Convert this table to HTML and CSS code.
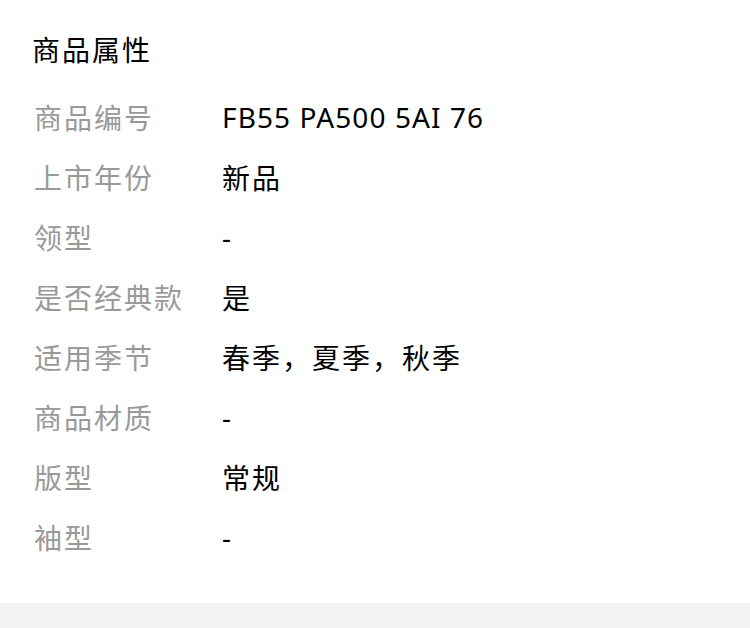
FILE: index.html
```html
<!DOCTYPE html>
<html lang="zh">
<head>
<meta charset="utf-8">
<link rel="stylesheet" href="styles.css">
</head>
<body>
<div class="page">
  <section class="attrs">
    <h2 class="title">商品属性</h2>
    <div class="row"><div class="label">商品编号</div><div class="value latin">FB55 PA500 5AI 76</div></div>
    <div class="row"><div class="label">上市年份</div><div class="value">新品</div></div>
    <div class="row"><div class="label">领型</div><div class="value">-</div></div>
    <div class="row"><div class="label">是否经典款</div><div class="value">是</div></div>
    <div class="row"><div class="label">适用季节</div><div class="value">春季，夏季，秋季</div></div>
    <div class="row"><div class="label">商品材质</div><div class="value">-</div></div>
    <div class="row"><div class="label">版型</div><div class="value">常规</div></div>
    <div class="row"><div class="label">袖型</div><div class="value">-</div></div>
  </section>
  <div class="footer"></div>
</div>
</body>
</html>
```
FILE: styles.css
```css
html, body {
  margin: 0;
  padding: 0;
  background: #ffffff;
}
.page {
  width: 750px;
  height: 628px;
  display: flex;
  flex-direction: column;
  font-family: "Noto Sans", "Noto Sans CJK SC", sans-serif;
}
.attrs {
  padding: 20px 0 36px 32px;
}
.title {
  margin: 0 0 7px 0;
  font-size: 28px;
  font-weight: 400;
  line-height: 60px;
  letter-spacing: 2px;
  color: #000;
}
.row {
  display: flex;
  height: 60px;
  align-items: center;
  font-size: 28px;
  letter-spacing: 2px;
}
.label {
  width: 188px;
  padding-left: 2px;
  color: #999999;
}
.value {
  color: #000;
}
.value.latin {
  letter-spacing: 1.1px;
}
.footer {
  flex: 1;
  background: #f2f2f2;
}
```
